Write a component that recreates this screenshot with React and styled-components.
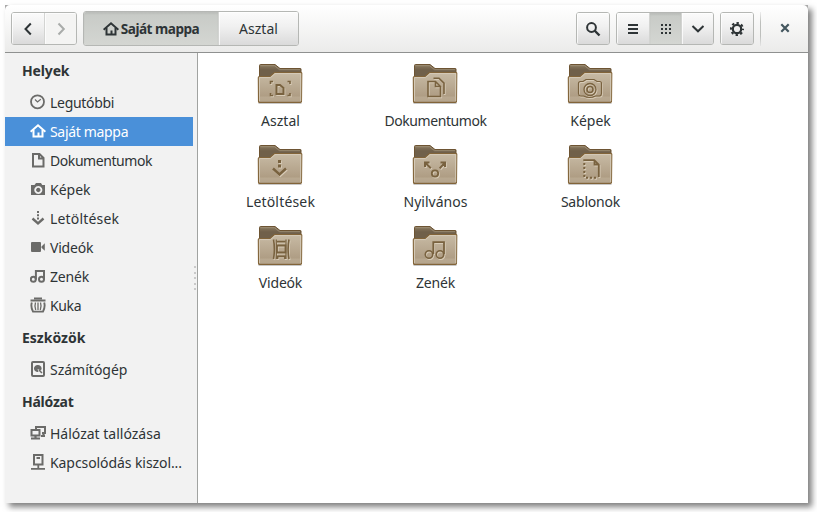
import React from 'react';
import styled, { createGlobalStyle, css } from 'styled-components';

const GlobalStyle = createGlobalStyle`
  * { box-sizing: border-box; }
  html, body { margin: 0; height: 512px; overflow: hidden; background: #fff; }
  body { font: 14px/20px "Noto Sans", sans-serif; color: #2e3436; }
  svg { display: block; flex: none; }
`;

const Window = styled.div`
  width: 803px;
  height: 498px;
  margin: 5px 0 0 5px;
  display: flex;
  flex-direction: column;
  background: #a9a9a9;
  box-shadow: 4px 4px 6px rgba(0, 0, 0, 0.5);
`;

const HeaderBar = styled.header`
  height: 48px;
  flex: none;
  display: flex;
  align-items: flex-start;
  gap: 6px;
  padding: 7px 5px 0 6px;
  border-bottom: 1px solid #8f9190;
  border-radius: 5px 5px 0 0;
  background: linear-gradient(#ffffff, #ebebea);
`;

const ButtonGroup = styled.div`
  display: flex;
  height: ${(p) => (p.$tall ? 35 : 33)}px;
  margin-top: ${(p) => (p.$tall ? -1 : 0)}px;
  border: 1px solid #b5b7b4;
  border-radius: 3px;
  overflow: hidden;
`;

const Spacer = styled.div`
  flex: 1;
`;

const Button = styled.button`
  width: ${(p) => p.$w}px;
  display: flex;
  align-items: center;
  justify-content: center;
  gap: 2px;
  padding: 0;
  border: 0;
  font: inherit;
  color: #2e3436;
  background: linear-gradient(#fbfbfb, #f0f0f0 45%, #dadada);
  box-shadow: inset 1px 1px 0 rgba(255, 255, 255, 0.75);
  & + & { border-left: 1px solid #d3d4d2; }
  ${(p) => p.$active && css`
    background: linear-gradient(#c7cac6, #d4d6d2);
    box-shadow: inset 0 2px 2px rgba(0, 0, 0, 0.06);
    font-weight: 700;
  `}
  ${(p) => p.$off && css`
    color: #a9acaa;
    background: #f4f4f3;
  `}
`;

const Divider = styled.div`
  width: 1px;
  height: 34px;
  background: linear-gradient(#eee, #bdbfbc 30%, #bdbfbc 70%, #e5e5e5);
`;

const CloseButton = styled.button`
  width: 36px;
  height: 33px;
  padding: 0 0 1px;
  border: 0;
  background: none;
  color: #44575f;
  display: flex;
  align-items: center;
  justify-content: center;
`;

const Body = styled.div`
  flex: 1;
  display: flex;
  min-height: 0;
`;

const Sidebar = styled.nav`
  width: 193px;
  display: flex;
  background: #f2f2f2;
  border-right: 1px solid #a1a3a1;
`;

const Places = styled.div`
  width: 188px;
`;

const Grip = styled.div`
  width: 4px;
  padding: 213px 0 0 1px;
  display: flex;
  flex-direction: column;
  gap: 3.500px;
`;

const GripDot = styled.i`
  width: 2px;
  height: 2px;
  background: #c9c9c9;
`;

const Text = styled.span`
  letter-spacing: ${(p) => p.$track || 0}px;
  white-space: nowrap;
`;

const CurrentFolder = styled(Text)`
  font-size: 13.6px;
`;

const Heading = styled.div`
  height: 35px;
  padding: 8px 0 0 17px;
  font-weight: 700;
`;

const Place = styled.div`
  height: 29px;
  display: flex;
  align-items: center;
  gap: 4px;
  padding: 1px 0 0 25px;
  color: ${(p) => (p.$selected ? '#fff' : '#2e3436')};
  background: ${(p) => (p.$selected ? '#4a90d9' : 'transparent')};
  svg { color: ${(p) => (p.$selected ? '#fff' : '#6b6b69')}; margin-top: -2px; }
`;

const Files = styled.main`
  flex: 1;
  display: grid;
  grid-template-columns: repeat(3, 155px);
  grid-auto-rows: 81px;
  padding: 7px 0 0 5px;
  background: #fff;
`;

const File = styled.div`
  display: flex;
  flex-direction: column;
  align-items: center;
  gap: 3px;
  svg { margin-right: 1px; }
`;

const Icon = ({ children, size = 16 }) => (
  <svg width={size} height={size} viewBox="0 0 16 16" fill="none" stroke="currentColor" strokeWidth="2">
    {children}
  </svg>
);

const home = (
  <>
    <path d="M.6 8.800 8 2.300l7.400 6.500" />
    <path d="M3.500 7v6.500h9V7" />
    <path d="M8.500 13v-3.500" />
  </>
);

const icons = {
  home,
  recent: (
    <>
      <circle cx="7.500" cy="7.800" r="6.500" strokeWidth="1.800" />
      <path d="M5 5.500 7.500 8l3.300-2.700" strokeWidth="1.200" />
    </>
  ),
  document: <path d="M3 2h6.500l4 4v8.500H3ZM9 2v4.500h4" strokeWidth="2" />,
  camera: (
    <path
      fill="currentColor"
      stroke="none"
      fillRule="evenodd"
      d="M1 4h3.500L6 2h5l1.200 2H15v10H1ZM8.300 4.900a4 4 0 1 0 .01 0ZM8.300 6.800a2.200 2.200 0 1 1-.01 0Z"
    />
  ),
  download: (
    <>
      <path d="M8 1v8.500" strokeDasharray="2 1.200" />
      <path d="m2.500 8.500 5.500 4.800 5.500-4.800" strokeWidth="2.400" />
    </>
  ),
  video: <path fill="currentColor" stroke="none" d="M2 3h8q1 0 1 1v8q0 1-1 1H2q-1 0-1-1V4q0-1 1-1ZM11.500 7.500l3.300-3.200v7.400l-3.300-3Z" />,
  music: (
    <>
      <circle cx="3.300" cy="11.300" r="2.500" />
      <circle cx="11.500" cy="11.300" r="2.500" />
      <path d="M5.900 11.500V3h8.100v8.500" />
    </>
  ),
  trash: (
    <>
      <path d="M.5 3.500h15M4 1.300h8" strokeWidth="1.800" />
      <path d="M1.800 5.500Q.5 10 3 14.600h10Q15.500 10 14.200 5.500" strokeWidth="1.900" />
      <path d="M5.500 5.500q-1.200 3.500.2 7.500M8 5.500V13M10.500 5.500q1.200 3.500-.2 7.500" strokeWidth="1.300" />
    </>
  ),
  disk: (
    <>
      <rect x="2" y="1" width="12" height="14" rx="1" />
      <path d="M8 4a3.500 3.500 0 1 0 .5 6.800L7.500 8 11 9.500A3.500 3.500 0 0 0 8 4Z" fill="currentColor" stroke="none" />
      <path d="m9 9 3 3" strokeWidth="1.500" />
    </>
  ),
  network: (
    <>
      <path d="M6 4V2h9v6h-3" />
      <path d="M1.500 5h8v5.500h-8Z" />
      <path d="M1 13.500h9M5.500 11v3M11 11h4M13.500 8v3" strokeWidth="2.200" />
    </>
  ),
  server: (
    <>
      <path d="M4 1h8.500v9.500H4Z" />
      <path d="M6.500 4h3.500M8.300 11v3M1 14.800h14" strokeWidth="1.800" />
    </>
  ),
  back: <path d="M10.800 2.500 5.500 8l5.300 5.500" />,
  forward: <path d="m5.500 2.500 5.300 5.500-5.300 5.500" />,
  search: (
    <>
      <circle cx="6.500" cy="6.500" r="4.400" />
      <path d="m9.500 9.500 5 5" strokeWidth="2.400" />
    </>
  ),
  list: <path d="M3 4h10M3 8h10M3 12h10" />,
  grid: <path d="M3 4h10M3 8h10M3 12h10" strokeDasharray="2 2" />,
  down: <path d="m2.500 5 5.500 5.300L13.500 5" />,
  gear: (
    <>
      <circle cx="8" cy="8" r="4.200" strokeWidth="2.200" />
      <circle cx="8" cy="8" r="6" strokeDasharray="2.400 2.312" strokeDashoffset="1.200" />
    </>
  ),
  close: <path d="m4.300 4.300 7.400 7.400M11.700 4.300l-7.400 7.400" strokeWidth="2.200" />,
};

const emblems = {
  desktop: (
    <>
      <path d="M14.500 24v-2.500H17M31.500 21.500H34V24M14.500 33v2.500H17M31.500 35.500H34V33" />
      <path d="M20.500 25h3.500l3.500 3v6h-7Z" strokeWidth="2" />
    </>
  ),
  documents: (
    <>
      <path d="M17 21.500h7.500l5 5v10H17ZM24.500 21.500v5h5" />
      <path d="M22.500 18.200H28l5 5V34" />
    </>
  ),
  pictures: (
    <>
      <path d="M14.500 21.500h2.500l3-2h8l3 2h2.500q2 0 2 2v10q0 2-2 2.500h-4q-6 3-12 0h-3q-2-.5-2-2.500v-10q0-2 2-2Z" strokeWidth="1.200" />
      <circle cx="24" cy="29.500" r="6" strokeWidth="1.300" />
      <circle cx="24" cy="29.500" r="3" />
    </>
  ),
  downloads: (
    <>
      <path d="M23.500 19v9" strokeWidth="3" strokeDasharray="3 1.500" />
      <path d="m17 27.500 6.500 6 6.500-6" strokeWidth="2.500" />
    </>
  ),
  share: (
    <>
      <circle cx="24" cy="32.500" r="3.200" strokeWidth="1.800" />
      <path d="m14 21.500 5.800 5.800M14 26v-4.500h4.500M34 21.500l-5.300 5.800M34 26v-4.500h-4.500" strokeWidth="2" />
    </>
  ),
  templates: (
    <>
      <path d="M17.300 19.200h11l4.500 4.500V36M28.500 19.500v4h4" strokeWidth="1.800" />
      <path d="M18.300 22v15M20 36.800h12" strokeWidth="2" strokeDasharray="2 2" />
    </>
  ),
  videos: (
    <>
      <path d="M17.500 17.500q1.800 9.500 0 19.500M33 17.500q-1.800 9.500 0 19.500" />
      <path d="M20.300 17.500v19.500M30 17.500v19.500" strokeWidth="1.200" />
      <path d="M21 23.500h8.500v7H21ZM21 19.700h8.500M21.500 37v-2.700h7.500V37" strokeWidth="1.800" />
    </>
  ),
  music: (
    <>
      <circle cx="18" cy="32.500" r="3.700" />
      <circle cx="29" cy="32.500" r="3.700" />
      <path d="M22.300 32V20.200H33V32" strokeWidth="1.800" />
    </>
  ),
};

const Folder = ({ emblem }) => (
  <svg width="48" height="48" viewBox="0 0 48 48" fill="none">
    <defs>
      <linearGradient id="front" x1="0" y1="0" x2="0" y2="1">
        <stop offset="0" stopColor="#c8bba5" />
        <stop offset="1" stopColor="#a8957b" />
      </linearGradient>
      <linearGradient id="rear" x1="0" y1="0" x2="0" y2="1">
        <stop offset="0" stopColor="#8c7b61" />
        <stop offset=".4" stopColor="#70604a" />
      </linearGradient>
    </defs>
    <path d="M2.500 43.500h43" stroke="#000" strokeOpacity=".22" />
    <path d="M3.500 17V5.500q0-1 1-1H19l5 4h20.500q.5 0 .5.500v9" fill="url(#rear)" stroke="#6d5433" />
    <path d="M4.500 5.700h14l5 4H44" stroke="#a3937a" strokeWidth=".8" />
    <path
      d="M3.500 16.500H14l4.500-4H45q.8 0 .8.800l-.3 28.300q0 .9-1 .9H3.500q-1 0-1-1L2.300 17.500q0-1 1.200-1Z"
      fill="url(#front)"
      stroke="#826439"
      strokeWidth="1.100"
    />
    <path d="M3.500 41V17.600h11l4.500-4h25.700V41" stroke="#d7cdbb" strokeWidth=".9" />
    <path d="M3.500 36.500h41V41h-41Z" fill="#c6b8a2" fillOpacity=".45" />
    <g transform="translate(.8 1)" stroke="#d8ccb8" strokeWidth="1.600">{emblem}</g>
    <g stroke="#79623f" strokeWidth="1.600">{emblem}</g>
  </svg>
);

const sections = [
  {
    title: 'Helyek',
    items: [
      ['recent', 'Legutóbbi'],
      ['home', 'Saját mappa'],
      ['document', 'Dokumentumok'],
      ['camera', 'Képek'],
      ['download', 'Letöltések'],
      ['video', 'Videók'],
      ['music', 'Zenék'],
      ['trash', 'Kuka'],
    ],
  },
  { title: 'Eszközök', items: [['disk', 'Számítógép']] },
  {
    title: 'Hálózat',
    items: [
      ['network', 'Hálózat tallózása'],
      ['server', 'Kapcsolódás kiszol...'],
    ],
  },
];

const files = [
  ['desktop', 'Asztal'],
  ['documents', 'Dokumentumok'],
  ['pictures', 'Képek'],
  ['downloads', 'Letöltések'],
  ['share', 'Nyilvános'],
  ['templates', 'Sablonok'],
  ['videos', 'Videók'],
  ['music', 'Zenék'],
];

const tracking = {
  Helyek: -0.15,
  Hálózat: -0.25,
  Legutóbbi: -0.3,
  'Saját mappa': -0.32,
  Dokumentumok: -0.43,
  Letöltések: 0.17,
  Videók: -0.2,
  Zenék: -0.15,
  Kuka: -0.35,
  Sablonok: -0.2,
  'Kapcsolódás kiszol...': -0.08,
};

const Label = ({ children }) => <Text $track={tracking[children]}>{children}</Text>;

export default function App() {
  return (
    <>
      <GlobalStyle />
      <Window>
        <HeaderBar>
          <ButtonGroup>
            <Button $w={32}><Icon>{icons.back}</Icon></Button>
            <Button $w={32} $off><Icon>{icons.forward}</Icon></Button>
          </ButtonGroup>
          <ButtonGroup $tall>
            <Button $w={134} $active>
              <Icon>{icons.home}</Icon>
              <CurrentFolder $track={-0.5}>Saját mappa</CurrentFolder>
            </Button>
            <Button $w={80}><Label>Asztal</Label></Button>
          </ButtonGroup>
          <Spacer />
          <ButtonGroup>
            <Button $w={32}><Icon>{icons.search}</Icon></Button>
          </ButtonGroup>
          <ButtonGroup>
            <Button $w={32}><Icon>{icons.list}</Icon></Button>
            <Button $w={32} $active><Icon>{icons.grid}</Icon></Button>
            <Button $w={32}><Icon>{icons.down}</Icon></Button>
          </ButtonGroup>
          <ButtonGroup>
            <Button $w={32}><Icon>{icons.gear}</Icon></Button>
          </ButtonGroup>
          <Divider />
          <CloseButton><Icon>{icons.close}</Icon></CloseButton>
        </HeaderBar>
        <Body>
          <Sidebar>
            <Places>
              {sections.map((section) => (
                <React.Fragment key={section.title}>
                  <Heading><Label>{section.title}</Label></Heading>
                  {section.items.map(([icon, name]) => (
                    <Place key={name} $selected={icon === 'home'}>
                      <Icon>{icons[icon]}</Icon>
                      <Label>{name}</Label>
                    </Place>
                  ))}
                </React.Fragment>
              ))}
            </Places>
            <Grip>
              {[0, 1, 2, 3, 4].map((dot) => <GripDot key={dot} />)}
            </Grip>
          </Sidebar>
          <Files>
            {files.map(([emblem, name]) => (
              <File key={name}>
                <Folder emblem={emblems[emblem]} />
                <Label>{name}</Label>
              </File>
            ))}
          </Files>
        </Body>
      </Window>
    </>
  );
}
